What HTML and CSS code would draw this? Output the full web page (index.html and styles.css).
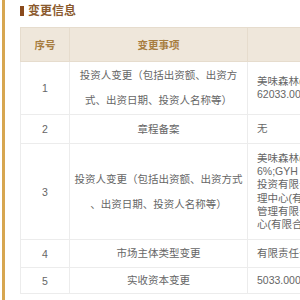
FILE: index.html
```html
<!DOCTYPE html>
<html lang="zh">
<head>
<meta charset="utf-8">
<link rel="stylesheet" href="styles.css">
</head>
<body>
<div class="panel">
  <div class="title"><span class="title-bar"></span><span class="title-text">变更信息</span></div>
  <table class="tbl">
    <colgroup>
      <col class="c1"><col class="c2"><col class="c3">
    </colgroup>
    <thead>
      <tr><th>序号</th><th>变更事项</th><th>变更前内容</th></tr>
    </thead>
    <tbody>
      <tr class="r1">
        <td class="num">1</td>
        <td class="item">投资人变更（包括出资额、出资方<br>式、出资日期、投资人名称等）</td>
        <td class="val">美味森林(北京)餐饮管理有限公司<br>62033.0000万人民币</td>
      </tr>
      <tr class="r2">
        <td class="num">2</td>
        <td class="item">章程备案</td>
        <td class="val">无</td>
      </tr>
      <tr class="r3">
        <td class="num">3</td>
        <td class="item">投资人变更（包括出资额、出资方式<br>、出资日期、投资人名称等）</td>
        <td class="val">美味森林(北京)餐饮管理有限公司<br>6%;GYH 有限公司 3%;北京股权<br>投资有限公司 2%;天津企业管<br>理中心(有限合伙) 1%;上海资产<br>管理有限公司;宁波投资管理中<br>心(有限合伙)</td>
      </tr>
      <tr class="r4">
        <td class="num">4</td>
        <td class="item">市场主体类型变更</td>
        <td class="val">有限责任公司(自然人投资或控股)</td>
      </tr>
      <tr class="r5">
        <td class="num">5</td>
        <td class="item">实收资本变更</td>
        <td class="val">5033.0000万人民币</td>
      </tr>
    </tbody>
  </table>
</div>
</body>
</html>
```
FILE: styles.css
```css
html, body {
  margin: 0;
  padding: 0;
  background: #ffffff;
  overflow: hidden;
  width: 300px;
  height: 300px;
}
body {
  font-family: "Liberation Sans", "Noto Sans CJK SC", sans-serif;
  color: #666666;
}
.panel {
  margin-left: 2px;
  border-left: 3px solid #d7a650;
  padding-left: 15px;
  padding-top: 4px;
  height: 300px;
  box-sizing: border-box;
}
.title {
  display: flex;
  align-items: center;
  height: 14px;
  margin-bottom: 9px;
}
.title-bar {
  width: 4px;
  height: 10px;
  background: #8a4a1c;
  margin-right: 4px;
}
.title-text {
  font-size: 12px;
  font-weight: bold;
  color: #8b5a2e;
  line-height: 14px;
}
.tbl {
  border-collapse: collapse;
  table-layout: fixed;
  width: 430px;
  font-size: 10.5px;
}
.c1 { width: 49px; }
.c2 { width: 178px; }
.c3 { width: 203px; }
.tbl th {
  background: #efe7db;
  color: #a77d3f;
  font-weight: bold;
  height: 34px;
  padding: 0;
  text-align: center;
  border: 1px solid #e6dccd;
  box-sizing: border-box;
}
.tbl td {
  border: 1px solid #ececec;
  vertical-align: middle;
  padding: 0;
  white-space: nowrap;
  box-sizing: border-box;
}
.num {
  text-align: center;
  color: #666666;
}
.item {
  text-align: center;
  line-height: 25px;
}
.tbl td.val {
  text-align: left;
  line-height: 13.3px;
  padding: 6px 0 6px 9px;
  overflow: hidden;
}
.r1 td { height: 53px; }
.r2 td { height: 29px; }
.r3 td { height: 96px; }
.r4 td { height: 28px; }
.r5 td { height: 26px; }
```
